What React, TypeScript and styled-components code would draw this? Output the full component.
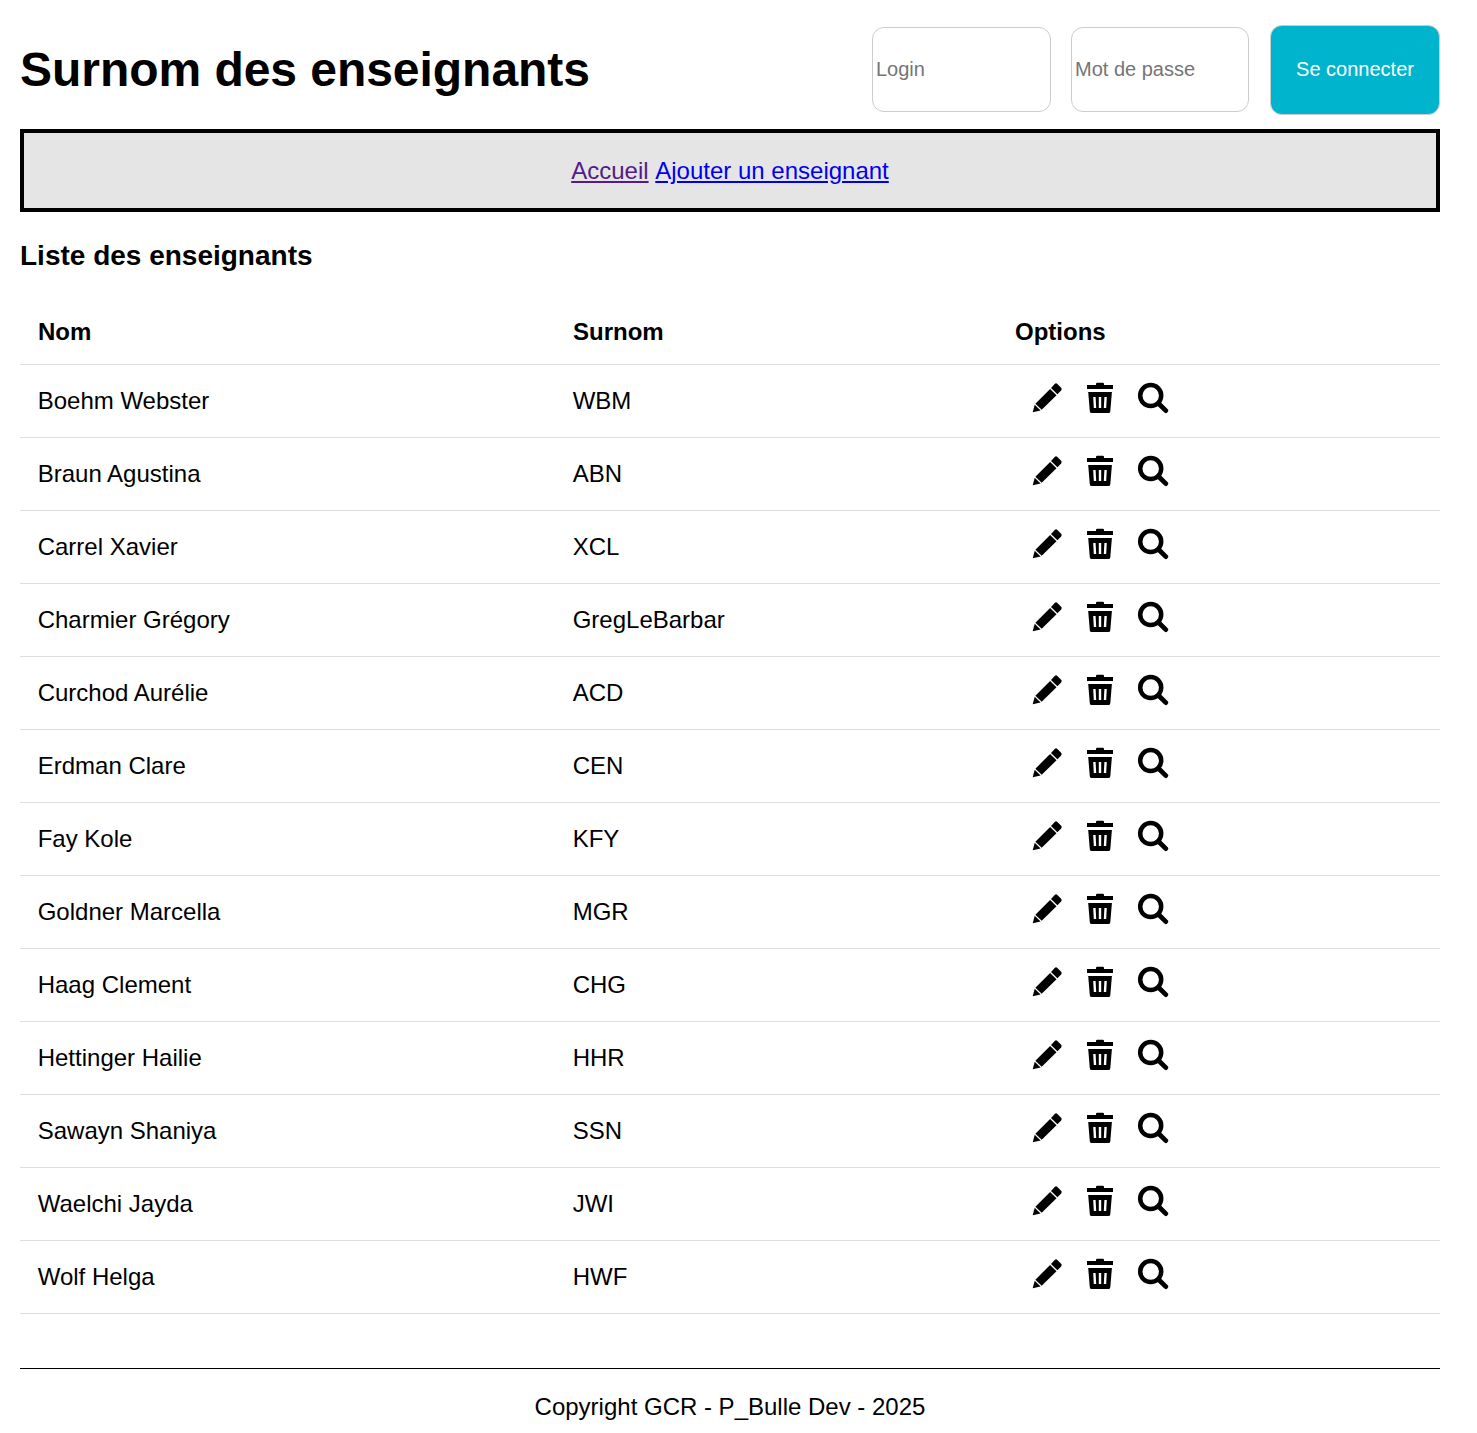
import React from "react";
import styled, { createGlobalStyle } from "styled-components";

const GlobalStyle = createGlobalStyle`
  * { box-sizing: border-box; }
  body {
    margin: 0;
    background: #fff;
    color: #000;
    font: 24px/27px "Liberation Sans", Arial, sans-serif;
  }
`;

const Page = styled.div`
  width: 1420px;
  margin-left: 20px;
`;

const Header = styled.header`
  display: flex;
  align-items: center;
  justify-content: space-between;
  height: 129px;
  padding-bottom: 1px;
`;

const Title = styled.h1`
  margin: 11px 0 0;
  padding-bottom: 1px;
  font-size: 48px;
  line-height: 55px;
  letter-spacing: -0.04px;
`;

const LoginForm = styled.form`
  display: flex;
  align-items: center;
  margin-top: 12px;
`;

const Field = styled.input<{ $gap: number; $width: number }>`
  width: ${(p) => p.$width}px;
  height: 85px;
  margin: 0 ${(p) => p.$gap}px 1px 0;
  padding: 1px 3px;
  border: 1px solid #ccc;
  border-radius: 12px;
  background: #fff;
  font: 20px "Liberation Sans", Arial, sans-serif;
  &::placeholder { color: #757575; }
`;

const SubmitButton = styled.button`
  width: 170px;
  height: 90px;
  padding: 0 0 2px;
  border: 1px solid #ccc;
  border-radius: 12px;
  background: #00b4cd;
  color: #fff;
  font: 20px "Liberation Sans", Arial, sans-serif;
`;

const Nav = styled.nav`
  height: 83px;
  padding-top: 24px;
  border: 4px solid #000;
  background: #e5e5e5;
  text-align: center;
  font-kerning: none;
`;

const NavLink = styled.a<{ $visited?: boolean }>`
  color: ${(p) => (p.$visited ? "#551a8b" : "#0000ee")};
  text-decoration: underline;
`;

const ListTitle = styled.h3`
  margin: 28px 0;
  font-size: 28px;
  line-height: 32px;
`;

const Table = styled.table`
  width: 100%;
  table-layout: fixed;
  border-collapse: separate;
  border-spacing: 0;
`;

const HeadCell = styled.th<{ $width: number }>`
  width: ${(p) => p.$width}px;
  height: 65px;
  padding: 0 18px 2px;
  border-bottom: 1px solid #ddd;
  text-align: left;
`;

const Cell = styled.td`
  height: 73px;
  padding: 0 18px 2px 17.7px;
  border-bottom: 1px solid #ddd;
`;

const Actions = styled.div`
  display: flex;
  gap: 21px;
  padding: 0 0 4px 16.3px;
`;

const ActionLink = styled.a`
  display: block;
  width: 32px;
  height: 32px;
  color: #000;
`;

const Icon = styled.svg`
  display: block;
  width: 32px;
  height: 32px;
`;

const Footer = styled.footer`
  margin-top: 54px;
  padding-top: 24px;
  border-top: 1px solid #000;
  text-align: center;
`;

const EditIcon = () => (
  <Icon viewBox="0 0 32 32" fill="currentColor">
    <path d="M1.7 30.3 3.7 22.7 9.6 28.4z" />
    <path d="M4.4 21.7 19.1 6.9 25.5 13.3 10.7 27.7z" />
    <path d="M20 5.9 23.7 2q1.3-1.3 2.7 0l3.7 3.7q1.3 1.3 0 2.7L26.4 12.3z" />
  </Icon>
);

const DeleteIcon = () => (
  <Icon viewBox="0 0 32 32">
    <path fill="currentColor" d="M3 3H12V2q0-1.2 1.2-1.2h5.6q1.2 0 1.2 1.2v1h9v3.9H3z" />
    <path fill="currentColor" d="M4.2 10h23.7l-1.6 19.2q-.1 1.9-2 1.9H7.8q-1.9 0-2-1.9z" />
    <path stroke="#fff" strokeWidth="2.4" fill="none" d="M10.4 15 11 26M16 15V26M21.6 15 21 26" />
  </Icon>
);

const ViewIcon = () => (
  <Icon viewBox="0 0 32 32" fill="none" stroke="currentColor">
    <circle cx="13.7" cy="13.6" r="10.5" strokeWidth="4.5" />
    <path d="M21.3 21.3 28.8 28.6" strokeWidth="4.8" strokeLinecap="round" />
  </Icon>
);

const teachers: [string, string][] = [
  ["Boehm Webster", "WBM"],
  ["Braun Agustina", "ABN"],
  ["Carrel Xavier", "XCL"],
  ["Charmier Grégory", "GregLeBarbar"],
  ["Curchod Aurélie", "ACD"],
  ["Erdman Clare", "CEN"],
  ["Fay Kole", "KFY"],
  ["Goldner Marcella", "MGR"],
  ["Haag Clement", "CHG"],
  ["Hettinger Hailie", "HHR"],
  ["Sawayn Shaniya", "SSN"],
  ["Waelchi Jayda", "JWI"],
  ["Wolf Helga", "HWF"],
];

export default function App() {
  return (
    <>
      <GlobalStyle />
      <Page>
        <Header>
          <Title>Surnom des enseignants</Title>
          <LoginForm>
            <Field type="text" placeholder="Login" $width={179} $gap={20} />
            <Field type="password" placeholder="Mot de passe" $width={178} $gap={21} />
            <SubmitButton type="button">Se connecter</SubmitButton>
          </LoginForm>
        </Header>
        <Nav>
          <NavLink href="#" $visited>Accueil</NavLink>{" "}
          <NavLink href="#ajouter">Ajouter un enseignant</NavLink>
        </Nav>
        <main>
          <ListTitle>Liste des enseignants</ListTitle>
          <Table>
            <thead>
              <tr>
                <HeadCell $width={535}>Nom</HeadCell>
                <HeadCell $width={442}>Surnom</HeadCell>
                <HeadCell $width={443}>Options</HeadCell>
              </tr>
            </thead>
            <tbody>
              {teachers.map(([name, nickname]) => (
                <tr key={name}>
                  <Cell>{name}</Cell>
                  <Cell>{nickname}</Cell>
                  <Cell>
                    <Actions>
                      <ActionLink href="#modifier"><EditIcon /></ActionLink>
                      <ActionLink href="#supprimer"><DeleteIcon /></ActionLink>
                      <ActionLink href="#detail"><ViewIcon /></ActionLink>
                    </Actions>
                  </Cell>
                </tr>
              ))}
            </tbody>
          </Table>
        </main>
        <Footer>Copyright GCR - P_Bulle Dev - 2025</Footer>
      </Page>
    </>
  );
}
